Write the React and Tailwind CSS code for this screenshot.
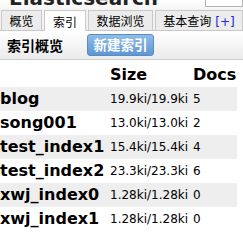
import React from 'react';

const indices = [
    { name: 'blog', size: '19.9ki/19.9ki', docs: '5' },
    { name: 'song001', size: '13.0ki/13.0ki', docs: '2' },
    { name: 'test_index1', size: '15.4ki/15.4ki', docs: '4' },
    { name: 'test_index2', size: '23.3ki/23.3ki', docs: '6' },
    { name: 'xwj_index0', size: '1.28ki/1.28ki', docs: '0' },
    { name: 'xwj_index1', size: '1.28ki/1.28ki', docs: '0' },
];

const tabs = [
    { label: '概览', w: 'w-[41px]', ml: 'ml-[1px]' },
    { label: '索引', w: 'w-[42px]', ml: 'ml-[2px]', active: true },
    { label: '数据浏览', w: 'w-[65px]', ml: 'ml-[2px]' },
    { label: '基本查询', w: 'w-[88px]', ml: 'ml-[2px]', plus: true },
];

export default function App() {
    return (
        <div className="w-[243px] h-[249px] overflow-hidden bg-white font-['DejaVu_Sans','Noto_Sans_CJK_SC',sans-serif] text-black">
            {/* header with title cut off at top */}
            <div className="h-[10px] flex overflow-hidden bg-gradient-to-b from-white to-[#f4f4f4]">
                <div className="ml-[9px] mt-[-12px] text-[20px] leading-[20px] font-bold text-[#222]">Elasticsearch</div>
                <div className="ml-auto mt-[-14px] w-[38px] h-[21px] border border-[#b5b5b5] bg-white"></div>
            </div>

            {/* tabs */}
            <div className="h-[20px] flex items-end bg-gradient-to-b from-[#f4f4f4] to-[#f0f0f0]">
                {tabs.map((t) => (
                    <div
                        key={t.label}
                        className={`${t.w} ${t.ml} h-[20px] flex items-center justify-center border border-b-0 border-[#c9c9c9] text-[12px] leading-none pt-[3px] ${t.active ? 'bg-white h-[21px] mb-[-1px] relative' : 'bg-[#ececec]'}`}
                    >
                        <span>{t.label}</span>
                        {t.plus && <span className="ml-[4px] text-[#2222dd] font-['DejaVu_Sans']">[+]</span>}
                    </div>
                ))}
            </div>

            {/* sub header */}
            <div className="h-[30px] flex items-center bg-gradient-to-b from-white to-[#ebebeb] border-t border-[#c9c9c9] border-b border-b-[#cfcfcf]">
                <div className="ml-[7px] text-[14px] font-bold font-['Noto_Sans_CJK_SC',sans-serif]">索引概览</div>
                <button className="ml-[24px] w-[67px] h-[22px] rounded-[3px] border border-[#5a8cc4] bg-gradient-to-b from-[#8fbde9] to-[#5d97d2] text-white text-[13.5px] font-bold leading-none font-['Noto_Sans_CJK_SC',sans-serif]">
                    新建索引
                </button>
            </div>

            {/* table */}
            <table className="w-[237px] border-collapse table-fixed">
                <thead>
                    <tr className="h-[27px]">
                        <th className="w-[110px] p-0"></th>
                        <th className="w-[83px] p-0 text-left text-[16px] font-bold align-middle pt-[2px]">Size</th>
                        <th className="w-[44px] p-0 text-left text-[16px] font-bold align-middle pt-[2px]">Docs</th>
                    </tr>
                </thead>
                <tbody>
                    {indices.map((idx, i) => (
                        <tr key={idx.name} className={`h-[24px] ${i % 2 === 0 ? 'bg-[#eeeeee]' : 'bg-white'}`}>
                            <td className="p-0 text-[16px] font-bold align-middle whitespace-nowrap">{idx.name}</td>
                            <td className="p-0 text-[12px] align-middle whitespace-nowrap">{idx.size}</td>
                            <td className="p-0 text-[12px] align-middle">{idx.docs}</td>
                        </tr>
                    ))}
                </tbody>
            </table>
        </div>
    );
}
